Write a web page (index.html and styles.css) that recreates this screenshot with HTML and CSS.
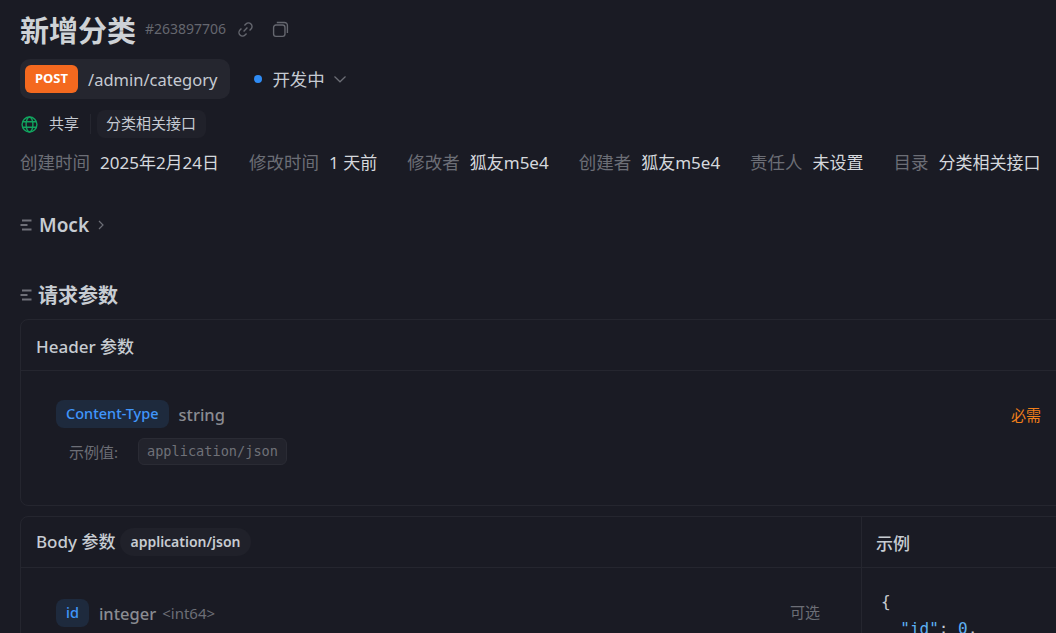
FILE: index.html
```html
<!DOCTYPE html>
<html lang="zh-CN">
  <head>
    <meta charset="utf-8">
    <title>新增分类</title>
    <link rel="stylesheet" href="styles.css">
  </head>

<body>
  <div class="page">
    <div class="title-row">
      <h1>新增分类</h1>
      <span class="api-id">#263897706</span>
      <svg class="tool-icon link-icon" viewBox="0 0 16 16"><path d="M6.2 9.8 9.8 6.2M7 4.2l1.4-1.4a3.3 3.3 0 0 1 4.8 4.7l-1.4 1.4M9 11.8 7.6 13.2a3.3 3.3 0 0 1-4.8-4.7l1.4-1.4"/></svg>
      <svg class="tool-icon copy-icon" viewBox="0 0 16 16"><rect x="1.5" y="3.8" width="10.7" height="10.7" rx="2.2"/><path d="M4.5 1.4h7.2A2.8 2.8 0 0 1 14.5 4.2v7.2"/></svg>
    </div>

    <div class="method-row">
      <div class="endpoint">
        <span class="method">POST</span>
        <span class="path">/admin/category</span>
      </div>
      <div class="status">
        <span class="status-dot"></span>
        <span class="status-text">开发中</span>
        <svg class="chevron-down" viewBox="0 0 14 14"><path d="M1.5 4.5 7 9.8 12.5 4.5"/></svg>
      </div>
    </div>

    <div class="tag-row">
      <svg class="globe" viewBox="0 0 16 16"><circle cx="8" cy="8" r="7"/><ellipse cx="8" cy="8" rx="3.2" ry="7"/><path d="M1.6 5.4h12.8M1.6 10.6h12.8"/></svg>
      <span class="share">共享</span>
      <span class="tag-sep"></span>
      <span class="tag">分类相关接口</span>
    </div>

    <div class="meta-row">
      <span class="meta"><span class="meta-key">创建时间</span>2025年2月24日</span>
      <span class="meta"><span class="meta-key">修改时间</span>1 天前</span>
      <span class="meta"><span class="meta-key">修改者</span>狐友m5e4</span>
      <span class="meta"><span class="meta-key">创建者</span>狐友m5e4</span>
      <span class="meta"><span class="meta-key">责任人</span>未设置</span>
      <span class="meta"><span class="meta-key">目录</span>分类相关接口</span>
    </div>

    <div class="section-head mock-head">
      <svg class="section-icon" viewBox="0 0 12 12"><path d="M2 1.5h9.5M0.5 6h7M2 10.5h9.5"/></svg>
      <span class="mock-title">Mock</span>
      <svg class="chevron-right" viewBox="0 0 8 12"><path d="M2 2 6 6 2 10"/></svg>
    </div>

    <div class="section-head params-head">
      <svg class="section-icon" viewBox="0 0 12 12"><path d="M2 1.5h9.5M0.5 6h7M2 10.5h9.5"/></svg>
      <span class="params-title">请求参数</span>
    </div>

    <div class="panel header-panel">
      <div class="panel-head">Header 参数</div>
      <div class="header-body">
        <div class="param-line">
          <span class="param-name">Content-Type</span>
          <span class="param-type">string</span>
          <span class="required">必需</span>
        </div>
        <div class="example-line">
          <span class="example-key">示例值:</span>
          <code class="example-value">application/json</code>
        </div>
      </div>
    </div>

    <div class="panel body-panel">
      <div class="body-left">
        <div class="panel-head">
          <span class="body-title">Body 参数</span>
          <span class="content-type">application/json</span>
        </div>
        <div class="body-params">
          <div class="param-line">
            <span class="param-name">id</span>
            <span class="param-type">integer</span>
            <span class="param-format">&lt;int64&gt;</span>
            <span class="optional">可选</span>
          </div>
        </div>
      </div>
      <div class="body-right">
        <div class="panel-head">示例</div>
<pre class="code">{
  <span class="code-key">"id"</span>: <span class="code-num">0</span>,</pre>
      </div>
    </div>
  </div>
</body>

</html>
```

FILE: styles.css
```css
html, body {
  margin: 0;
  height: 100%;
  overflow: hidden;
  background: #1a1b24;
}

.page {
  width: 1100px;
  height: 633px;
  overflow: hidden;
  padding: 12px 0 0 20px;
  box-sizing: border-box;
  font-family: "Noto Sans", "Noto Sans CJK SC", sans-serif;
  color: #d0d4da;
}

.title-row {
  display: flex;
  align-items: center;
  height: 38px;
}

.title-row h1 {
  margin: 0;
  font-size: 29px;
  line-height: 38px;
  font-weight: 700;
  color: #ced2d6;
}

.api-id {
  margin: 0 0 5px 9px;
  font-size: 14px;
  color: #65676f;
}

.tool-icon {
  width: 17px;
  height: 17px;
  margin-bottom: 4px;
  fill: none;
  stroke: #65676f;
  stroke-width: 1.3;
}

.link-icon {
  margin-left: 11px;
}

.copy-icon {
  margin-left: 18px;
}

.method-row {
  display: flex;
  align-items: center;
  margin-top: 9px;
}

.endpoint {
  display: flex;
  align-items: center;
  height: 40px;
  padding: 0 13px 0 5px;
  background: #25262f;
  border-radius: 10px;
}

.method {
  width: 53px;
  height: 28px;
  line-height: 27px;
  text-align: center;
  background: #f4691f;
  border-radius: 6px;
  color: #fff;
  font-size: 13px;
  font-weight: 700;
}

.path {
  margin-left: 10px;
  font-size: 16.5px;
  color: #c5cad2;
}

.status {
  display: flex;
  align-items: center;
  margin-left: 24px;
  font-size: 17.5px;
  color: #c5cad2;
}

.status-dot {
  width: 8px;
  height: 8px;
  margin-right: 10px;
  border-radius: 50%;
  background: #2f8cf5;
}

.status-text {
  margin-bottom: 2px;
}

.chevron-down {
  width: 14px;
  height: 14px;
  margin-left: 8px;
  fill: none;
  stroke: #6c6e76;
  stroke-width: 1.2;
}

.tag-row {
  display: flex;
  align-items: center;
  height: 28px;
  margin-top: 11px;
  font-size: 15px;
}

.globe {
  width: 17px;
  height: 17px;
  margin-left: 1px;
  fill: none;
  stroke: #12a45f;
  stroke-width: 1.3;
}

.share {
  margin: 0 0 3px 11px;
  color: #c5cad2;
}

.tag-sep {
  width: 1px;
  height: 20px;
  margin: 0 6px 0 11px;
  background: #25262f;
}

.tag {
  height: 28px;
  line-height: 26px;
  padding: 0 10px 0 9px;
  border-radius: 8px;
  background: #20212a;
  color: #c5cad2;
}

.meta-row {
  display: flex;
  gap: 30px;
  margin-top: 12px;
  font-size: 17px;
  line-height: 24px;
  white-space: nowrap;
  color: #d5d8dd;
}

.meta-key {
  margin-right: 10px;
  font-size: 17.5px;
  color: #6c6e76;
}

.section-head {
  display: flex;
  align-items: center;
  line-height: 26px;
}

.section-icon {
  width: 12px;
  height: 12px;
  margin-right: 7px;
  fill: none;
  stroke: #6f7078;
  stroke-width: 2;
}

.mock-head {
  margin-top: 37px;
  font-size: 19px;
}

.mock-title {
  font-weight: 600;
  color: #c7ccd2;
}

.chevron-right {
  width: 8px;
  height: 12px;
  margin-left: 8px;
  fill: none;
  stroke: #6c6e76;
  stroke-width: 1.2;
}

.params-head {
  margin-top: 44px;
  font-size: 20px;
}

.params-title {
  margin: 2px 0 0 -1px;
  line-height: 24px;
  font-weight: 700;
  color: #c7ccd2;
}

.panel {
  border: 1px solid #25262f;
  border-radius: 8px;
}

.header-panel {
  height: 187px;
  margin-top: 11px;
  box-sizing: border-box;
}

.panel-head {
  display: flex;
  align-items: center;
  gap: 5px;
  height: 50px;
  padding: 0 15px;
  border-bottom: 1px solid #25262f;
  font-size: 17px;
  font-weight: 500;
  color: #c7ccd2;
}

.body-title {
  margin-bottom: 4px;
}

.header-body {
  padding: 29px 58px 0 35px;
}

.param-line {
  display: flex;
  align-items: center;
}

.param-name {
  height: 28px;
  line-height: 27px;
  padding: 0 10px;
  border-radius: 8px;
  background: #1e2a3d;
  color: #4096fb;
  font-size: 14.5px;
  font-weight: 500;
}

.param-type {
  margin-left: 10px;
  font-size: 16.5px;
  font-weight: 500;
  color: #8a8c92;
}

.required {
  margin-left: auto;
  font-size: 15px;
  color: #f07f1a;
}

.example-line {
  display: flex;
  align-items: center;
  margin-top: 10px;
  padding-left: 13px;
}

.example-key {
  width: 69px;
  font-size: 15px;
  color: #6c6e76;
}

.example-value {
  height: 27px;
  line-height: 25px;
  box-sizing: border-box;
  padding: 0 8px;
  border: 1px solid #2a2b34;
  border-radius: 6px;
  background: #22232c;
  font-family: "DejaVu Sans Mono", monospace;
  font-size: 13.6px;
  color: #6f7178;
}

.body-panel {
  display: flex;
  height: 160px;
  margin-top: 10px;
}

.body-left {
  width: 840px;
  border-right: 1px solid #25262f;
}

.body-right {
  flex: 1;
}

.body-right .panel-head {
  padding-left: 14px;
}

.content-type {
  height: 28px;
  line-height: 27px;
  padding: 0 10px;
  border-radius: 14px;
  background: #20212a;
  font-size: 14px;
  font-weight: 600;
}

.body-params {
  padding: 31px 41px 0 35px;
}

.param-format {
  margin-left: 6px;
  font-size: 15px;
  color: #6c6e76;
}

.optional {
  margin: 0 0 4px auto;
  font-size: 15px;
  color: #6c6e76;
}

.code {
  margin: 20px 0 0 19px;
  font-family: "DejaVu Sans Mono", monospace;
  font-size: 16px;
  line-height: 27px;
  color: #c7ccd2;
}

.code-key {
  color: #5db0f5;
}

.code-num {
  color: #5db0f5;
}
```
